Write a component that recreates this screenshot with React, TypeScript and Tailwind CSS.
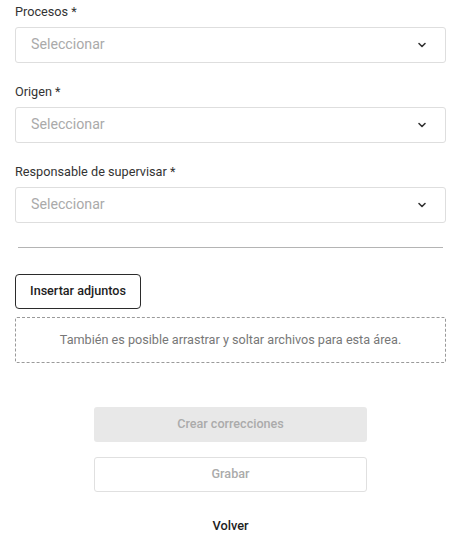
import React from 'react';
import { ChevronDown } from 'lucide-react';

const fields = ['Procesos *', 'Origen *', 'Responsable de supervisar *'];

const SelectField = ({ label }: { label: string }) => (
  <div className="flex flex-col">
    <label className="text-[12.7px] leading-[18px] text-[#333] mb-[6px]">{label}</label>
    <div className="h-9 border border-[#dedede] rounded-[3px] bg-white flex items-center justify-between pl-[15px] pr-[17px]">
      <span className="text-[14.2px] text-[#aaaaaa]">Seleccionar</span>
      <ChevronDown size={12} strokeWidth={3.2} className="text-[#333]" />
    </div>
  </div>
);

const App = () => {
  return (
    <div className="w-[460px] h-[537px] bg-white pl-[15px] pr-[14px] pt-[3px] overflow-hidden" style={{ fontFamily: 'Roboto, "Liberation Sans", sans-serif' }}>
      <div className="flex flex-col gap-5">
        {fields.map((f, i) => (
          <SelectField key={i} label={f} />
        ))}
      </div>

      <div className="mt-[24px] mx-[3px] h-px bg-[#b4b4b4]" />

      <button className="mt-[26px] h-[35px] w-[126px] border border-[#2b2b2b] rounded-[4px] text-[12.6px] font-medium text-[#1e1e1e]">
        Insertar adjuntos
      </button>

      <div className="mt-[8px] h-[46px] border border-dashed border-[#9a9a9a] rounded-[2px] flex items-center justify-center text-[12.65px] text-[#777]">
        También es posible arrastrar y soltar archivos para esta área.
      </div>

      <div className="mt-[44px] flex flex-col items-center">
        <button className="w-[273px] h-[35px] bg-[#e8e8e8] rounded-[3px] text-[12.6px] font-medium text-[#ababab]">
          Crear correcciones
        </button>
        <button className="mt-[15px] w-[273px] h-[35px] border border-[#e0e0e0] rounded-[3px] bg-white text-[12.6px] font-medium text-[#ababab]">
          Grabar
        </button>
        <button className="mt-[24px] text-[12.8px] font-medium text-[#1e1e1e]">Volver</button>
      </div>
    </div>
  );
};

export default App;
